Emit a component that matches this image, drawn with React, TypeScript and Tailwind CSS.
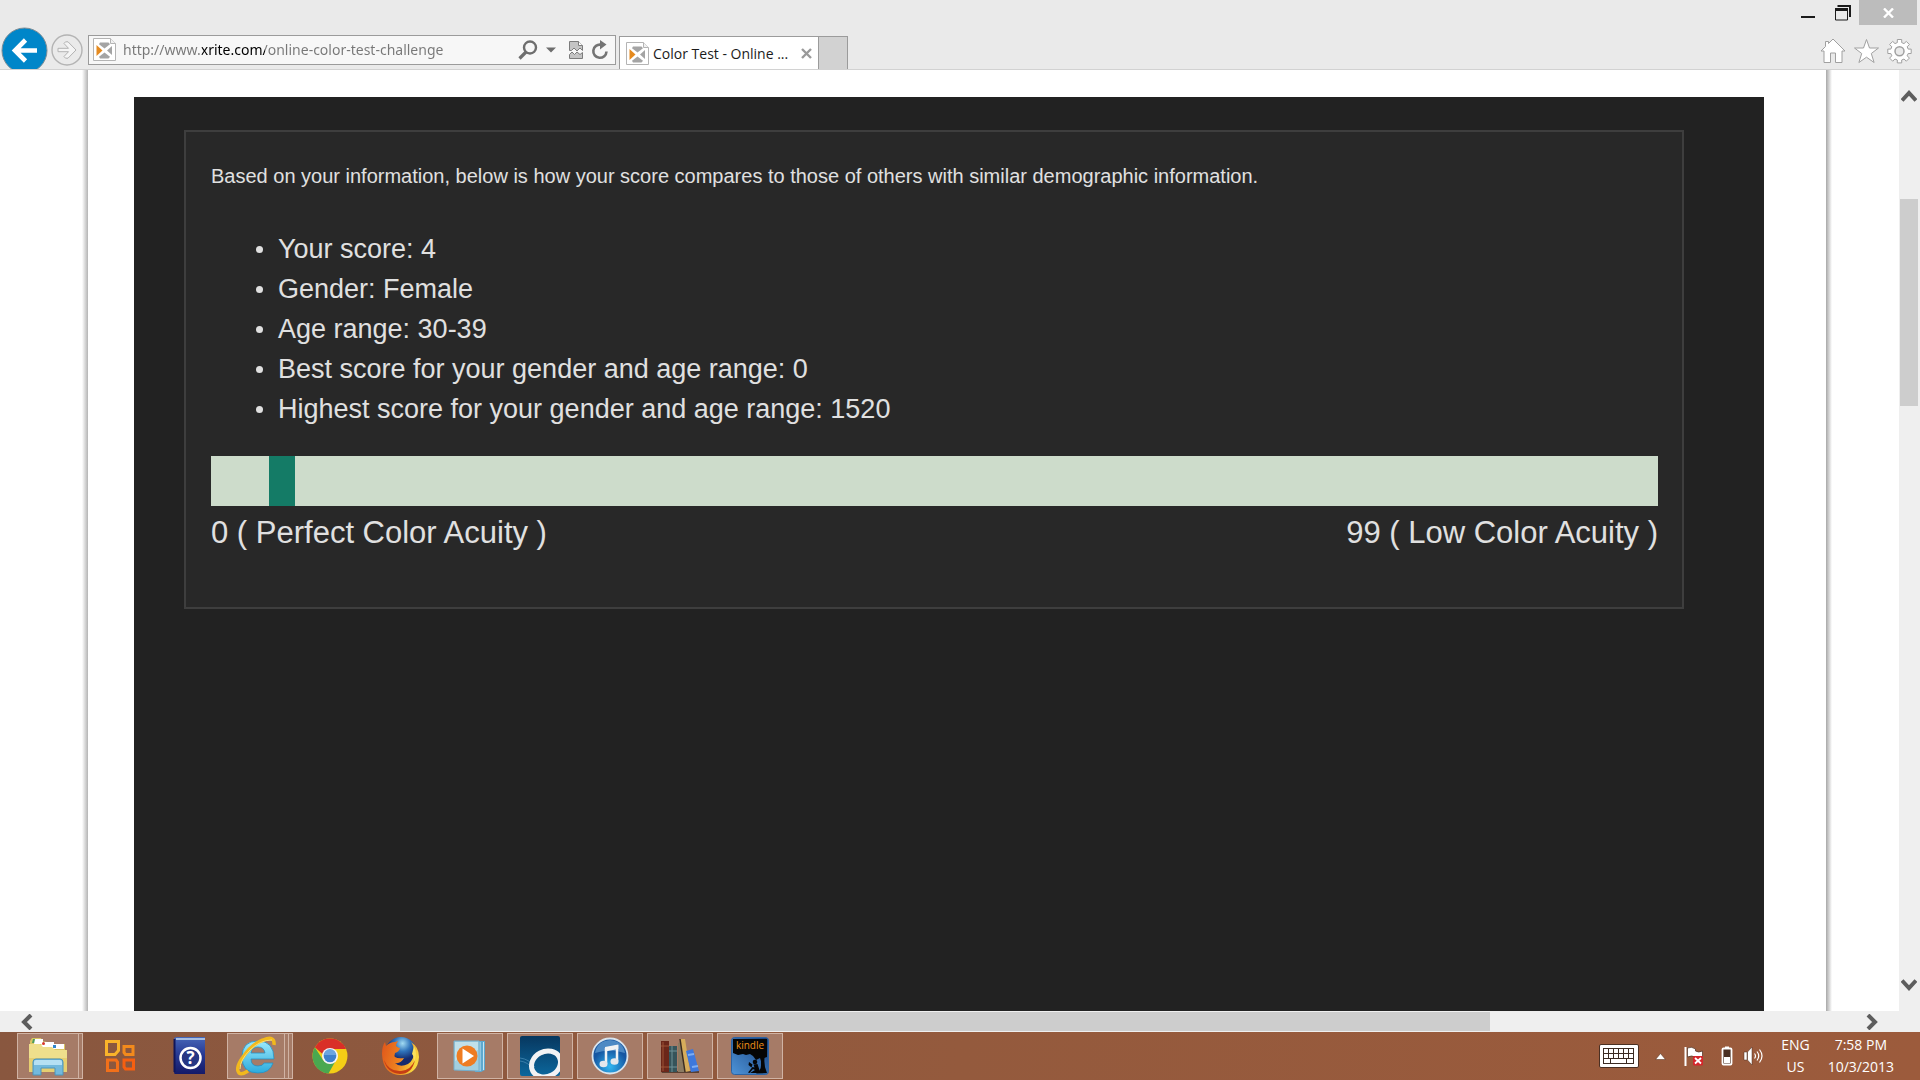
import type { ReactNode } from "react";

const SCORE = 4;

const RESULTS = [
  "Your score: 4",
  "Gender: Female",
  "Age range: 30-39",
  "Best score for your gender and age range: 0",
  "Highest score for your gender and age range: 1520",
];

export default function App() {
  return (
    <div className="flex h-screen flex-col overflow-hidden bg-white font-['Open_Sans','Noto_Sans',sans-serif]">
      <BrowserHeader />
      <div className="flex min-h-0 flex-1">
        <Page />
        <VerticalScrollbar />
      </div>
      <HorizontalScrollbar />
      <Taskbar />
    </div>
  );
}

/* ---------- Browser chrome ---------- */

function BrowserHeader() {
  return (
    <header className="shrink-0 border-b border-[#d2d2d2] bg-[#eaeaea]">
      <div className="flex h-[25px] justify-end pr-[3px]">
        <button aria-label="Minimize" className="flex w-9 items-center justify-center">
          <svg width="14" height="20" viewBox="0 0 14 20">
            <path d="M0 14h14" stroke="#1b1b1b" strokeWidth="2" />
          </svg>
        </button>
        <button aria-label="Restore" className="flex w-[33px] items-center justify-center">
          <svg width="16" height="16" viewBox="0 0 16 16" fill="none" stroke="#1b1b1b">
            <path d="M2.500 1h12.500v11" strokeWidth="2" />
            <path d="M.5 4v11h12V4" />
            <path d="M0 4.500h13" strokeWidth="3" />
          </svg>
        </button>
        <button aria-label="Close" className="flex w-[58px] items-center justify-center bg-[#bcbcbc]">
          <svg width="11" height="10" viewBox="0 0 11 10">
            <path d="M1 .5l9 9M10 .5l-9 9" stroke="#fff" strokeWidth="2.400" />
          </svg>
        </button>
      </div>

      <div className="flex h-11 items-start overflow-hidden pt-[2px]">
        <button aria-label="Back" className="ml-[1px] shrink-0">
          <svg width="47" height="47" viewBox="0 0 47 47">
            <circle cx="23.500" cy="23.500" r="22.500" fill="#0086c9" stroke="#7d8d96" />
            <path d="M36 23.500H14M24.500 13L14 23.500l10.500 10.500" fill="none" stroke="#fff" strokeWidth="4.600" />
          </svg>
        </button>
        <button aria-label="Forward" className="mt-[7px] ml-[3px] shrink-0">
          <svg width="32" height="32" viewBox="0 0 32 32" fill="none" stroke="#b3b3b3">
            <circle cx="16" cy="16" r="15" strokeWidth="1.400" />
            <path d="M7 14.300h10.500l-4.500-4.800 1.500-1.700h2.500l8 8.200-8 8.200h-2.500l-1.500-1.700 4.500-4.800H7z" fill="#f4f4f4" />
          </svg>
        </button>

        <div className="mt-2 ml-[5px] flex h-[30px] w-[528px] items-center border border-[#9b9b9b] bg-[#f7f7f7] pr-1.5 pl-1">
          <Favicon />
          <input
            aria-label="Address"
            defaultValue="http://www.xrite.com/online-color-test-challenge"
            className="ml-[7px] min-w-0 flex-1 bg-[linear-gradient(90deg,#777_79px,#000_79px,#000_142px,#777_142px)] bg-clip-text font-['Noto_Sans',sans-serif] text-sm text-transparent outline-none"
          />
          <button aria-label="Search">
            <svg width="20" height="20" viewBox="0 0 20 20" fill="none" stroke="#6e6e6e">
              <circle cx="12" cy="7.500" r="6" strokeWidth="2.400" />
              <path d="M8 12l-6.500 6.500" strokeWidth="3.200" />
            </svg>
          </button>
          <button aria-label="Show address list" className="ml-2">
            <svg width="10" height="6" viewBox="0 0 10 6">
              <path d="M0 .5h10L5 5.500z" fill="#6e6e6e" />
            </svg>
          </button>
          <button aria-label="Compatibility view" className="ml-[13px]">
            <svg width="14" height="18" viewBox="0 0 14 18" stroke="#7c7c7c" fill="#c4c4c4">
              <path d="M.5 9.500v-9h9l4 4v5l-2.500-2.500-3 3L5 7 2.500 9.500z" />
              <path d="M9.500 .5v4h4" fill="#fff" />
              <path d="M.5 17.500v-4L3 11l2.500 2.500L8 11l3 2.500 2.500-2v6z" />
            </svg>
          </button>
          <button aria-label="Refresh" className="ml-2">
            <svg width="18" height="20" viewBox="0 0 18 20">
              <path d="M15.500 11.500A6.600 6.600 0 1 1 10 4.700" fill="none" stroke="#747474" strokeWidth="2.600" />
              <path d="M9 0l6.500 4.500L9 9.500z" fill="#747474" />
            </svg>
          </button>
        </div>

        <div className="mt-[9px] ml-[3px] flex h-[34px] w-[200px] items-center border border-b-0 border-[#9b9b9b] bg-white px-1.5">
          <Favicon />
          <span className="ml-1 flex-1 truncate text-sm text-[#1b1b1b]">Color Test - Online ...</span>
          <button aria-label="Close tab">
            <svg width="11" height="11" viewBox="0 0 11 11">
              <path d="M1 1l9 9M10 1l-9 9" stroke="#9a9a9a" strokeWidth="2.400" />
            </svg>
          </button>
        </div>
        <button
          aria-label="New tab"
          className="mt-[9px] h-[34px] w-[29px] border-t border-r border-[#9b9b9b] bg-[#d2d2d2]"
        />

        <nav className="mt-[11px] mr-2 ml-auto flex gap-2">
          <button aria-label="Home">
            <svg width="26" height="26" viewBox="0 0 26 26" fill="#fff" stroke="#a0a0a0" strokeLinejoin="round">
              <path d="M13 1l12 12h-3v11.500h-6.500V15h-5v9.500H4V13H1l4.500-4.500V3.500h3v2z" />
            </svg>
          </button>
          <button aria-label="Favorites">
            <svg width="25" height="26" viewBox="0 0 25 26" fill="#fff" stroke="#a0a0a0">
              <path d="M12.500 1.500l3 8.500h9l-7.200 5.500 2.800 9-7.600-5.300-7.600 5.300 2.800-9L.5 10h9z" />
            </svg>
          </button>
          <button aria-label="Tools">
            <svg width="25" height="26" viewBox="0 0 25 26" fill="#fff" stroke="#a0a0a0" strokeLinejoin="round">
              <path d="M10.300 1.500h4.400v3.100l2.300 1 2.300-2.200 3.100 3.100-2.200 2.300 1 2.300h3v4.400h-3l-1 2.300 2.200 2.300-3.100 3.100-2.300-2.200-2.300 1v2.900h-4.400V22l-2.300-1-2.300 2.200-3.100-3.100 2.200-2.300-1-2.300h-3v-4.400h3l1-2.300-2.200-2.300 3.100-3.100L8 5.600l2.300-1z" />
              <circle cx="12.500" cy="13.200" r="4.500" fill="#eaeaea" strokeWidth="1.500" />
            </svg>
          </button>
        </nav>
      </div>
    </header>
  );
}

function Favicon() {
  return (
    <svg width="23" height="24" viewBox="0 0 23 24" className="shrink-0">
      <path d="M.5 .5h17l5 5v17H.5z" fill="#fff" stroke="#b4b4b4" />
      <path d="M17.500 .5v5h5" fill="#f1f1f1" stroke="#b4b4b4" />
      <path d="M7 4.500h8.500l1.500 1.700-5.500 4.300-5.500-4.300z" fill="#a4a4a4" />
      <path d="M7 20.500h8.500l1.500-1.700-5.500-4.300-5.500 4.300z" fill="#a4a4a4" />
      <path d="M19 8v9l-5-4.500z" fill="#a4a4a4" />
      <path d="M3.500 7v11l6-5.500z" fill="#e58a1f" />
    </svg>
  );
}

function VerticalScrollbar() {
  return (
    <div className="flex w-[21px] shrink-0 flex-col items-center bg-[#efefef] pt-5 pr-0.5 pb-5">
      <button aria-label="Scroll up">
        <svg width="16" height="13" viewBox="0 0 16 13">
          <path d="M1 10.500l7-7.500 7 7.500" fill="none" stroke="#5d5d5d" strokeWidth="4" />
        </svg>
      </button>
      <div className="flex w-full flex-1 flex-col pl-px">
        <div className="flex-[96]" />
        <div className="flex-[206] bg-[#cdcdcd]" />
        <div className="flex-[571]" />
      </div>
      <button aria-label="Scroll down">
        <svg width="16" height="13" viewBox="0 0 16 13">
          <path d="M1 2.500L8 10l7-7.500" fill="none" stroke="#5d5d5d" strokeWidth="4" />
        </svg>
      </button>
    </div>
  );
}

function HorizontalScrollbar() {
  return (
    <div className="flex h-[21px] shrink-0 items-center bg-[#efefef] pr-[41px] pl-5">
      <button aria-label="Scroll left">
        <svg width="13" height="16" viewBox="0 0 13 16">
          <path d="M11 1L4 8l7 7" fill="none" stroke="#5d5d5d" strokeWidth="4" />
        </svg>
      </button>
      <div className="flex h-full flex-1 py-px">
        <div className="flex-[367]" />
        <div className="flex-[1090] bg-[#cdcdcd]" />
        <div className="flex-[376]" />
      </div>
      <button aria-label="Scroll right">
        <svg width="13" height="16" viewBox="0 0 13 16">
          <path d="M2 1l7 7-7 7" fill="none" stroke="#5d5d5d" strokeWidth="4" />
        </svg>
      </button>
    </div>
  );
}

/* ---------- Page content ---------- */

function Page() {
  return (
    <main className="flex min-w-0 flex-1 bg-white font-['Liberation_Sans',Arial,sans-serif]">
      <div className="flex w-[88px] shrink-0 justify-end">
        <div className="w-1.5 bg-linear-to-r from-white to-[#b4b4b4]" />
      </div>
      <div className="flex min-w-0 flex-1 pt-[27px] pr-[62px] pl-[46px]">
        <div className="min-w-0 flex-1 bg-[#222] pt-[33px] pr-20 pl-[50px] text-[#e0e0e0]">
          <section className="border-2 border-[#3e3e3e] bg-[#282828] pt-8 pr-6 pb-[54px] pl-[25px]">
            <p className="text-xl leading-6">
              Based on your information, below is how your score compares to those of others with similar
              demographic information.
            </p>
            <ul className="mt-[41px] pl-[45px] text-[27px] leading-10">
              {RESULTS.map((line) => (
                <li key={line} className="flex items-center gap-[15px]">
                  <span className="size-[7px] rounded-full bg-[#e0e0e0]" />
                  {line}
                </li>
              ))}
            </ul>
            <div className="mt-[27px] h-[50px] bg-[#cddccb]">
              <div className="h-full w-[26px] bg-[#147b66]" style={{ marginLeft: `${SCORE}%` }} />
            </div>
            <div className="mt-[7px] flex justify-between text-[31px] leading-10">
              <span>0 ( Perfect Color Acuity )</span>
              <span>99 ( Low Color Acuity )</span>
            </div>
          </section>
        </div>
      </div>
      <div className="flex w-[73px] shrink-0">
        <div className="w-1.5 bg-linear-to-r from-[#a8a8a8] to-white" />
      </div>
    </main>
  );
}

/* ---------- Taskbar ---------- */

function Taskbar() {
  return (
    <footer className="flex h-12 shrink-0 items-center bg-linear-to-r from-[#89573f] via-[#945a3d] to-[#9c5b3c]">
      <div className="flex h-full flex-1 gap-1 pl-[17px]">
        <TaskButton label="File Explorer" open stack={1}>
          <ExplorerIcon />
        </TaskButton>
        <TaskButton label="Office">
          <OfficeIcon />
        </TaskButton>
        <TaskButton label="Help">
          <HelpIcon />
        </TaskButton>
        <TaskButton label="Internet Explorer" open stack={2}>
          <IeIcon />
        </TaskButton>
        <TaskButton label="Chrome">
          <ChromeIcon />
        </TaskButton>
        <TaskButton label="Firefox">
          <FirefoxIcon />
        </TaskButton>
        <TaskButton label="Media Player" open>
          <MediaIcon />
        </TaskButton>
        <TaskButton label="OverDrive" open>
          <OverdriveIcon />
        </TaskButton>
        <TaskButton label="iTunes" open>
          <ItunesIcon />
        </TaskButton>
        <TaskButton label="Library" open>
          <BooksIcon />
        </TaskButton>
        <TaskButton label="Kindle" open>
          <KindleIcon />
        </TaskButton>
      </div>
      <Tray />
    </footer>
  );
}

function TaskButton({
  label,
  open = false,
  stack = 0,
  children,
}: {
  label: string;
  open?: boolean;
  stack?: number;
  children: ReactNode;
}) {
  const frame = open ? "border border-[#d0b3a4] bg-[#a67b67]" : "";
  return (
    <button aria-label={label} className="flex h-full w-[66px] py-px">
      <span className={`flex h-full min-w-0 flex-1 items-center justify-center ${frame}`}>{children}</span>
      {Array.from({ length: stack }, (_, i) => (
        <span key={i} className="h-full w-1 border-y border-r border-[#d0b3a4] bg-[#a67b67]" />
      ))}
    </button>
  );
}

function ExplorerIcon() {
  return (
    <svg width="40" height="40" viewBox="0 0 40 40">
      <path d="M2 5l2-3h9l1 3 10 2v3l13-2v28H2z" fill="#d9c662" />
      <path d="M5 3h8l2 4H4z" fill="#4f9c58" />
      <path d="M7 3h8v5H6z" fill="#fff" />
      <path d="M14 6h12v5H13z" fill="#fff" />
      <circle cx="15.500" cy="7.500" r="1.500" fill="#d8382c" />
      <path d="M24 8h12v5H24z" fill="#fff" />
      <path d="M25 9h3v3h-3z" fill="#2f87cd" />
      <path d="M1 8h11l3 3h9l3 3h12v22H1z" fill="#efdf8c" />
      <path d="M1 22h38v14H1z" fill="#e6cf70" />
      <path d="M5 39V26q0-3 3-3h24q3 0 3 3v13h-8v-7H13v7z" fill="#73b9dc" stroke="#4d94ba" />
      <path d="M6 26q0-2 2-2h24q2 0 2 2v3H6z" fill="#b5e0f3" />
    </svg>
  );
}

function OfficeIcon() {
  return (
    <svg width="32" height="34" viewBox="0 0 32 34" fill="none" strokeWidth="3">
      <path d="M2.500 2.500h12v9l-3.500 4H2.500z" stroke="#f9b32a" />
      <path d="M20 7.500h9v8h-7.500l-1.500-2z" stroke="#f38a1c" />
      <path d="M3.500 21h8.500l1.500 2v8.500h-10z" stroke="#f2701a" />
      <path d="M20 21h9.500v9h-8l-1.500-2z" stroke="#f65f10" />
    </svg>
  );
}

function HelpIcon() {
  return (
    <svg width="34" height="40" viewBox="0 0 34 40">
      <defs>
        <linearGradient id="help" x2="0" y2="1">
          <stop stopColor="#4666b8" />
          <stop offset=".5" stopColor="#253791" />
          <stop offset="1" stopColor="#151a68" />
        </linearGradient>
      </defs>
      <path d="M1 3q0-2 3-2h28v37H2q-1 0-1-2z" fill="url(#help)" />
      <path d="M3 2h29v2H3z" fill="#a6bde2" />
      <path d="M1.500 3v33" stroke="#10165a" strokeWidth="2" />
      <circle cx="17.500" cy="22" r="10" fill="#263784" stroke="#fff" strokeWidth="2.500" />
      <text x="17.500" y="28" textAnchor="middle" fontSize="17" fontWeight="700" fill="#fff">
        ?
      </text>
    </svg>
  );
}

function IeIcon() {
  return (
    <svg width="40" height="40" viewBox="0 0 40 40">
      <defs>
        <linearGradient id="ie" x2="0" y2="1">
          <stop stopColor="#9deafc" />
          <stop offset="1" stopColor="#2cabdd" />
        </linearGradient>
      </defs>
      <path
        d="M38 23H15q0 7 7 7 5 0 6-3h9q-3 10-15 10Q6 37 6 21 6 5 22 5q16 0 16 18zM15 17h14q-1-6-7-6t-7 6z"
        fill="url(#ie)"
        stroke="#2690c4"
        strokeWidth=".8"
      />
      <path
        d="M12 35q-6 4-9 2-4-5 4-16Q16 8 27 4q12-5 11 5"
        fill="none"
        stroke="#f2b91d"
        strokeWidth="3.500"
      />
      <path d="M4 33Q4 24 14 14T36 4" fill="none" stroke="#fbe176" />
    </svg>
  );
}

function ChromeIcon() {
  return (
    <svg width="36" height="36" viewBox="0 0 36 36">
      <circle cx="18" cy="18" r="17.500" fill="#f4ce16" />
      <path d="M2.800 9.300A17.500 17.500 0 0 1 34 11H18a8 8 0 0 0-7.500 5z" fill="#d92f28" />
      <path d="M2.800 9.300A17.500 17.500 0 0 0 16.500 35.500l7-12.500a8 8 0 0 1-12.500-1z" fill="#4aa850" />
      <circle cx="18" cy="18" r="8" fill="#f2f4f7" />
      <circle cx="18" cy="18" r="6.300" fill="#3e80cc" />
      <path d="M12 17a6 6 0 0 1 12 0z" fill="#6ba4df" />
    </svg>
  );
}

function FirefoxIcon() {
  return (
    <svg width="38" height="40" viewBox="0 0 38 40">
      <defs>
        <radialGradient id="globe" cx=".55" cy=".2">
          <stop stopColor="#a2dbf2" />
          <stop offset=".5" stopColor="#3074bb" />
          <stop offset="1" stopColor="#152b6e" />
        </radialGradient>
        <linearGradient id="fox" x2="1" y2=".3">
          <stop stopColor="#df541b" />
          <stop offset=".6" stopColor="#ee8420" />
          <stop offset="1" stopColor="#f8d63e" />
        </linearGradient>
      </defs>
      <circle cx="20" cy="17" r="16" fill="url(#globe)" />
      <path
        d="M1 18Q1 10 4 6l1 4q4-4 9-4l3-1q-2 3-2 5 2 2 4 2-1 4-5 5-1 3 0 4 3 2 9 1-3 6-9 5 5 5 13 1 6-4 6-12 0-6-3-10 8 5 8 15Q37 38 20 39 2 39 1 18z"
        fill="url(#fox)"
      />
      <path d="M3 24q5 12 17 11 10-1 14-11-3 14-15 14Q6 37 3 24z" fill="#c53d15" />
      <path d="M33 10q4 8 0 16 0-6-2-8z" fill="#f9e15d" />
    </svg>
  );
}

function MediaIcon() {
  return (
    <svg width="34" height="34" viewBox="0 0 34 34">
      <path d="M24 2h8v29l-4 2h-6z" fill="#5ea9cf" />
      <path d="M27 3v29M30.500 3v28" stroke="#c5e6f4" />
      <path d="M1 2h25v30L1 31z" fill="#a3cfe0" stroke="#74aecb" />
      <path d="M2 3h23v8L2 22z" fill="#c1e0ea" />
      <circle cx="14" cy="17" r="10.500" fill="#ef7c22" />
      <path d="M9.500 9.500L21 17 9.500 24.500z" fill="#fff" />
    </svg>
  );
}

function OverdriveIcon() {
  return (
    <svg width="40" height="40" viewBox="0 0 40 40">
      <defs>
        <linearGradient id="od" x2="0" y2="1">
          <stop stopColor="#07375f" />
          <stop offset="1" stopColor="#0c679c" />
        </linearGradient>
        <clipPath id="odClip">
          <path d="M0 0h40v40H0z" />
        </clipPath>
      </defs>
      <rect width="40" height="40" rx="2" fill="url(#od)" />
      <g fill="none" clipPath="url(#odClip)">
        <path d="M0 22q9 1 15 9M0 25q8 1 13 8" stroke="#4e8fb7" strokeWidth=".7" />
        <ellipse cx="26" cy="28" rx="15" ry="12.500" stroke="#f2f3f4" strokeWidth="5" transform="rotate(-28 26 28)" />
      </g>
    </svg>
  );
}

function ItunesIcon() {
  return (
    <svg width="38" height="38" viewBox="0 0 38 38">
      <defs>
        <radialGradient id="itunes" cx=".5" cy=".8">
          <stop stopColor="#31b6f1" />
          <stop offset="1" stopColor="#1556a2" />
        </radialGradient>
      </defs>
      <circle cx="19" cy="19" r="17.500" fill="url(#itunes)" stroke="#d9e4ed" strokeWidth="1.800" />
      <path d="M4 16Q6 4 19 3q13 1 15 13-15-5-30 0z" fill="#83bce5" opacity=".5" />
      <path d="M15 27V12l11-2.500V24" fill="none" stroke="#f0f2f4" strokeWidth="2.500" />
      <path d="M14 10l13.300-2.500v4.500L14 14.500z" fill="#f0f2f4" />
      <ellipse cx="12.500" cy="27" rx="4" ry="3.200" fill="#e3e7ec" />
      <ellipse cx="23.500" cy="24.500" rx="4" ry="3.200" fill="#e3e7ec" />
    </svg>
  );
}

function BooksIcon() {
  return (
    <svg width="40" height="36" viewBox="0 0 40 36">
      <path d="M1 33h38v2H2z" fill="#5a4032" />
      <path d="M1 3h8v31H1z" fill="#6b2619" />
      <path d="M3 4v29M1 8h8M1 29h8" stroke="#9d5336" />
      <path d="M9 8h8v26H9z" fill="#36545a" />
      <path d="M12 8v26M9 13h8M9 29h8" stroke="#6e9196" />
      <path d="M18 5l4-1 3 30h-7z" fill="#8b7b62" />
      <path d="M20 1h5l5 32-5 1z" fill="#d7ad5b" />
      <path d="M20 1l5 33" stroke="#3b2c20" strokeWidth="1.500" />
      <path d="M26 13l7-2 6 22-8 1z" fill="#3d78dd" />
      <path d="M28 17l6-1M32 29l6-1" stroke="#7eaef3" strokeWidth="2" />
    </svg>
  );
}

function KindleIcon() {
  return (
    <svg width="38" height="38" viewBox="0 0 38 38">
      <defs>
        <linearGradient id="kindle" x1="1" x2="0" y2="1">
          <stop stopColor="#173f7c" />
          <stop offset="1" stopColor="#4e94d8" />
        </linearGradient>
      </defs>
      <rect x=".5" y=".5" width="37" height="37" rx="3" fill="url(#kindle)" stroke="#2c63a3" />
      <path d="M2 2h34v18l-3 1-1 3h-2l-1-3-4 2-3-4-3-2-4 1-3-1-5 1-5-2z" fill="#050505" />
      <path d="M30 18h4q-2 9 2 18l-11 .5q5-3 5-8z" fill="#050505" />
      <circle cx="24" cy="25" r="2.300" fill="#050505" />
      <path d="M22.500 27.500l4-.5 2 6v3H19l5-3-2-1-3.500 4-1.500-.5 4.500-5.500 2 .5z" fill="#050505" />
      <path d="M18 25l3.500 2.500-1 3-3-2.500z" fill="#050505" />
      <text x="19" y="12" textAnchor="middle" fontSize="10" fill="#f09018">
        kindle
      </text>
    </svg>
  );
}

function Tray() {
  return (
    <div className="flex items-center text-center text-sm leading-[22px] text-white">
      <button aria-label="Touch keyboard">
        <svg width="40" height="24" viewBox="0 0 40 24">
          <rect x=".5" y=".5" width="39" height="23" rx="1.500" fill="#fff" stroke="#4a2f22" />
          <path d="M4 4h31v16H4z" fill="#3a2a22" />
          <path
            d="M5 5h4v4H5zM10 5h4v4h-4zM15 5h4v4h-4zM20 5h4v4h-4zM25 5h4v4h-4zM30 5h4v4h-4zM5 10h4v4H5zM10 10h4v4h-4zM15 10h4v4h-4zM20 10h4v4h-4zM25 10h4v4h-4zM30 10h4v4h-4zM5 15h6v4H5zM12 15h15v4H12zM28 15h6v4h-6z"
            fill="#fff"
          />
        </svg>
      </button>
      <button aria-label="Show hidden icons" className="ml-4">
        <svg width="11" height="7" viewBox="0 0 11 7">
          <path d="M.5 6.500L5.500 .5l5 6z" fill="#fff" stroke="#5c3a2a" strokeWidth=".6" />
        </svg>
      </button>
      <button aria-label="Action Center" className="ml-[18px]">
        <svg width="20" height="20" viewBox="0 0 20 20">
          <path d="M1.500 1v19" stroke="#fff" strokeWidth="2" />
          <path d="M3.500 2q4-2 8 1v2q3 2 7 0v7q-4 2-7-1-4-2-8 0z" fill="#fff" stroke="#4a2f22" strokeWidth=".7" />
          <rect x="9" y="10" width="10" height="9.500" rx="1" fill="#d5262b" />
          <path d="M11 12l6 5.500M17 12l-6 5.500" stroke="#fff" strokeWidth="1.800" />
        </svg>
      </button>
      <button aria-label="Battery" className="ml-[17px]">
        <svg width="12" height="20" viewBox="0 0 12 20">
          <path d="M4 .5h4v2H4z" fill="#fff" />
          <rect x="1.500" y="2.500" width="9" height="16" rx="1" fill="#4a2f22" stroke="#fff" strokeWidth="1.800" />
          <path d="M3 11h6v6H3z" fill="#fff" />
        </svg>
      </button>
      <button aria-label="Volume" className="ml-[10px]">
        <svg width="20" height="20" viewBox="0 0 20 20">
          <path d="M1 6h3v8H1zM4.500 6L9 1v18l-4.500-5z" fill="#fff" stroke="#4a2f22" strokeWidth=".5" />
          <path d="M11.500 7.500q2 2.500 0 5M14 5.500q3.500 4.500 0 9M16.500 3.500q5 6.500 0 13" fill="none" stroke="#fff" strokeWidth="1.200" />
        </svg>
      </button>
      <button className="ml-[18px]">
        ENG
        <br />
        US
      </button>
      <button className="mr-[26px] ml-[18px]">
        7:58 PM
        <br />
        10/3/2013
      </button>
    </div>
  );
}
